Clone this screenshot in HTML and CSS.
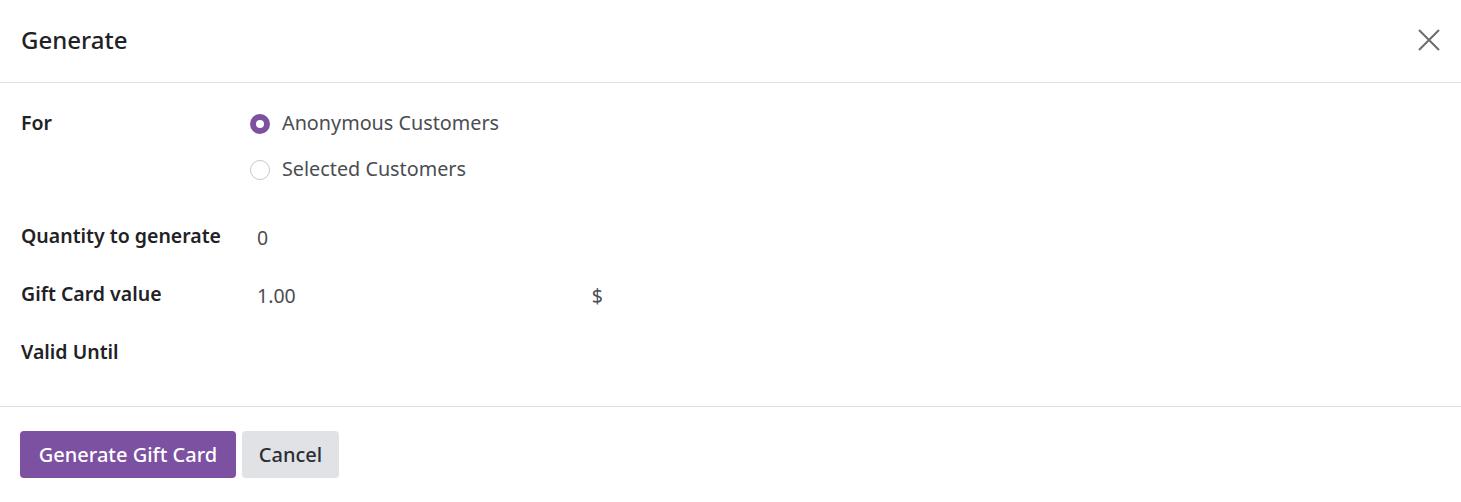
FILE: index.html
```html
<!DOCTYPE html>
<html>
<head>
<meta charset="utf-8">
<link rel="stylesheet" href="styles.css">
</head>
<body>
<div class="dialog">
  <header class="dlg-header">
    <h4 class="dlg-title">Generate</h4>
    <button class="dlg-close" aria-label="Close">
      <svg width="22" height="22" viewBox="0 0 22 22"><path d="M1 1 L21 21 M21 1 L1 21" stroke="#6c6c6c" stroke-width="2" fill="none"/></svg>
    </button>
  </header>
  <main class="dlg-body">
    <div class="row row-for">
      <div class="lbl lbl-for">For</div>
      <div class="radios">
        <label class="radio-opt"><span class="radio checked"></span><span class="radio-text">Anonymous Customers</span></label>
        <label class="radio-opt"><span class="radio"></span><span class="radio-text">Selected Customers</span></label>
      </div>
    </div>
    <div class="row field-row">
      <div class="lbl">Quantity to generate</div>
      <div class="val">0</div>
    </div>
    <div class="row field-row">
      <div class="lbl">Gift Card value</div>
      <div class="val money"><span class="money-num">1.00</span><span class="cur">$</span></div>
    </div>
    <div class="row field-row">
      <div class="lbl">Valid Until</div>
      <div class="val"></div>
    </div>
  </main>
  <footer class="dlg-footer">
    <button class="btn btn-primary">Generate Gift Card</button>
    <button class="btn btn-secondary">Cancel</button>
  </footer>
</div>
</body>
</html>
```

FILE: styles.css
```css
* { box-sizing: border-box; }
html, body { margin: 0; padding: 0; background: #fff; }
body {
  font-family: "Noto Sans", "Open Sans", sans-serif;
  color: #212529;
  font-size: 19.5px;
}
.dialog { width: 1461px; }
.dlg-header {
  height: 83px;
  border-bottom: 1px solid #dee0e6;
  display: flex;
  align-items: center;
  justify-content: space-between;
  padding: 0 21px 3px 21px;
}
.dlg-title {
  margin: 0;
  font-size: 24px;
  font-weight: 500;
  color: #1f2226;
}
.dlg-close {
  background: none;
  border: 0;
  padding: 0;
  width: 22px;
  height: 22px;
  display: flex;
  cursor: pointer;
}
.dlg-body {
  padding: 18px 0 18px 21px;
  border-bottom: 1px solid #dee0e6;
}
.row {
  display: grid;
  grid-template-columns: 229px 1fr;
}
.lbl {
  font-weight: 600;
  color: #1f2226;
  line-height: 27px;
}
.lbl-for { padding-top: 8px; }
.radios { display: flex; flex-direction: column; }
.radio-opt {
  height: 46px;
  display: flex;
  align-items: center;
  gap: 12px;
  color: #4a4d52;
}
.radio-text { margin-top: -3px; font-size: 19.8px; }
.radio {
  width: 20px;
  height: 20px;
  border-radius: 50%;
  border: 1px solid #c6c8cc;
  background: #fff;
  flex: none;
}
.radio.checked {
  border: 6px solid #7c51a1;
  background: #fff;
}
.row-for { margin-bottom: 21px; }
.field-row { height: 58px; }
.field-row .lbl { padding-top: 8px; }
.val {
  padding: 10px 0 0 7px;
  line-height: 27px;
  color: #4a4d52;
}
.money {
  display: flex;
  width: 353px;
  justify-content: space-between;
}
.cur { color: #4a4d52; }
.dlg-footer {
  display: flex;
  gap: 6px;
  padding: 24px 20px;
}
.btn {
  font-family: inherit;
  font-size: 20px;
  font-weight: 500;
  height: 47px;
  border: 0;
  border-radius: 4px;
  padding: 0;
  cursor: pointer;
}
.btn-primary {
  background: #7c51a1;
  color: #fff;
  width: 216px;
}
.btn-secondary {
  background: #e0e2e6;
  color: #2b2e33;
  width: 97px;
}
```
